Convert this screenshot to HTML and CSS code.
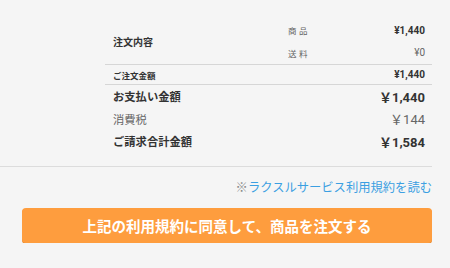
FILE: index.html
```html
<!DOCTYPE html>
<html lang="ja">

<head>
    <meta charset="UTF-8">
    <meta name="viewport" content="width=device-width, initial-scale=1.0">
    <title>ご注文確認</title>
    <link rel="stylesheet" href="styles.css">
</head>

<body>
    <div class="page">
        <!-- 注文金額 -->
        <div class="summary">
            <div class="order-block">
                <div class="order-title">注文内容</div>
                <div class="order-items">
                    <div class="item-row">
                        <span class="item-label">商品</span>
                        <span class="item-price">¥1,440</span>
                    </div>
                    <div class="item-row">
                        <span class="item-label">送料</span>
                        <span class="item-price light">¥0</span>
                    </div>
                </div>
            </div>
            <div class="subtotal-row">
                <span>ご注文金額</span>
                <span class="item-price">¥1,440</span>
            </div>
            <div class="total-block">
                <div class="total-row strong">
                    <span>お支払い金額</span>
                    <span class="amount">￥1,440</span>
                </div>
                <div class="total-row muted">
                    <span>消費税</span>
                    <span class="amount">￥144</span>
                </div>
                <div class="total-row strong">
                    <span>ご請求合計金額</span>
                    <span class="amount">￥1,584</span>
                </div>
            </div>
        </div>

        <div class="terms">
            <span class="mark">※</span><a href="#" class="terms-link">ラクスルサービス利用規約を読む</a>
        </div>

        <button class="order-button" type="button">上記の利用規約に同意して、商品を注文する</button>
    </div>
</body>

</html>
```

FILE: styles.css
```css
body {
    margin: 0;
    background-color: #f5f5f5;
    font-family: Roboto, "Noto Sans CJK JP", sans-serif;
    color: #333;
}

.page {
    width: 432px;
    padding-top: 19px;
}

.summary {
    padding-left: 105px;
    padding-bottom: 13px;
    border-bottom: 1px solid #dcdcdc;
}

.order-block {
    display: flex;
    align-items: center;
    border-bottom: 1px solid #d6d6d6;
}

.order-title {
    width: 175px;
    padding-left: 8px;
    font-size: 10px;
    font-weight: bold;
}

.order-items {
    flex: 1;
    padding-right: 7px;
}

.item-row {
    display: flex;
    justify-content: space-between;
    align-items: center;
    height: 22.5px;
}

.item-label {
    font-size: 8.5px;
    letter-spacing: 2.5px;
    color: #666;
}

.item-price {
    font-size: 10px;
    font-weight: bold;
}

.item-price.light {
    font-weight: normal;
    color: #666;
}

.subtotal-row {
    display: flex;
    justify-content: space-between;
    align-items: center;
    height: 19px;
    padding: 0 7px 0 8px;
    font-size: 8.5px;
    font-weight: bold;
    border-bottom: 1px solid #d6d6d6;
}

.total-block {
    padding: 0 7px 0 8px;
}

.total-row {
    display: flex;
    justify-content: space-between;
    align-items: center;
    height: 22.5px;
    font-size: 11.3px;
}

.total-row .amount {
    font-size: 13px;
}

.total-row.strong {
    font-weight: bold;
}

.total-row.muted {
    color: #666;
}

.terms {
    margin-top: 11px;
    text-align: right;
    font-size: 12.3px;
}

.mark {
    color: #888;
}

.terms-link {
    color: #3b9fe2;
    text-decoration: none;
}

.order-button {
    display: block;
    width: 410px;
    height: 35px;
    margin: 12px 0 0 22px;
    border: none;
    border-radius: 4px;
    background-color: #fe9d3e;
    box-shadow: 0 1px 0 #e58b34;
    color: #fff;
    font-family: Roboto, "Noto Sans CJK JP", sans-serif;
    font-size: 14.5px;
    font-weight: bold;
    cursor: pointer;
}
```
